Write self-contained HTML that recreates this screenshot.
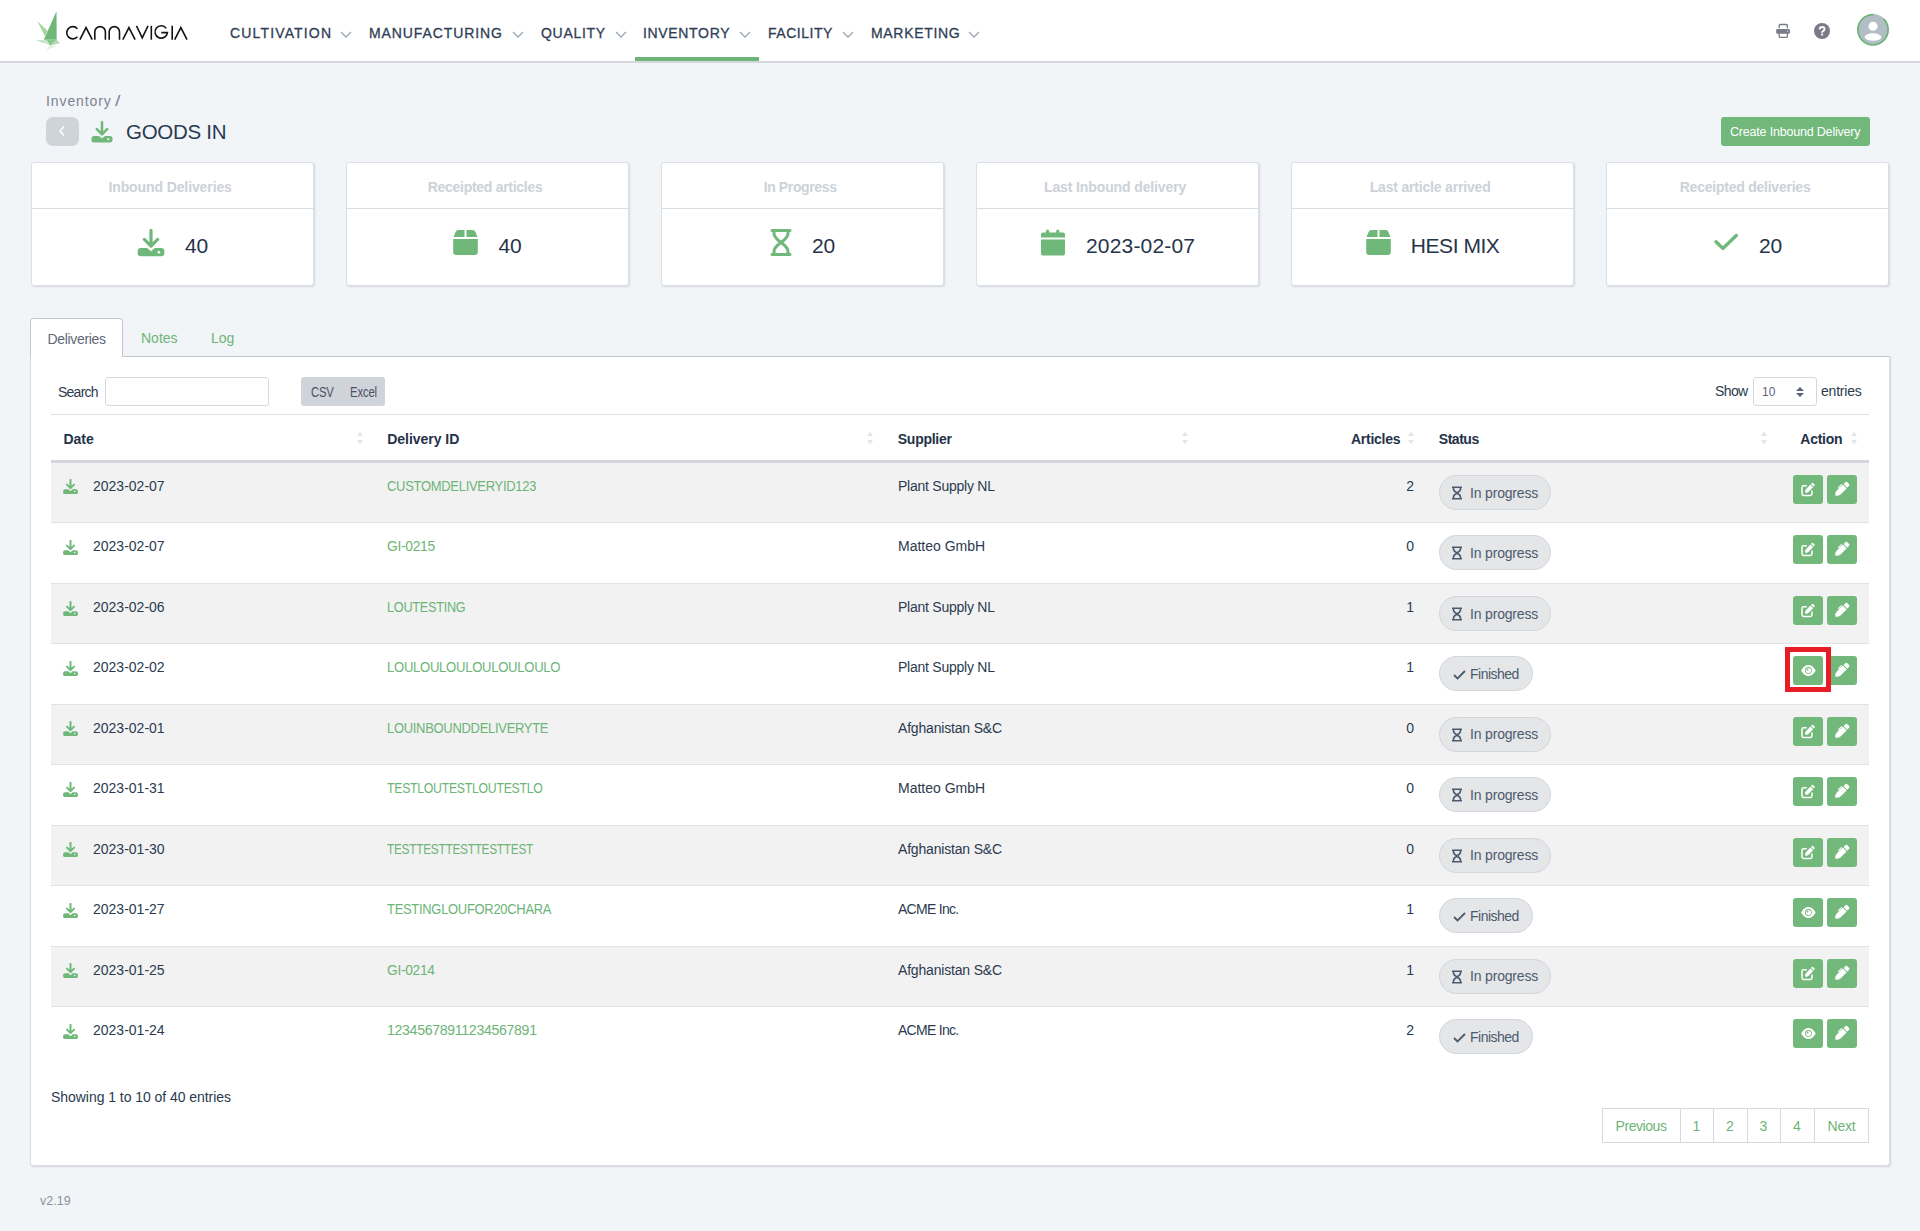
<!DOCTYPE html>
<html><head><meta charset="utf-8"><style>
*{box-sizing:border-box}
html,body{margin:0;padding:0}
body{width:1920px;height:1231px;overflow:hidden;position:relative;background:#f1f5f8;font-family:"Liberation Sans",sans-serif;color:#2c3a4f}
.abs{position:absolute;white-space:nowrap}
#hdr{position:absolute;left:0;top:0;width:1920px;height:63px;background:#fff;border-bottom:2px solid #d5d9de}
.nav{position:absolute;top:25px;font-size:14px;color:#2f3e56;-webkit-text-stroke:0.3px #2f3e56;white-space:nowrap;line-height:16px}
.chev{position:absolute;top:31px;width:12px;height:7px}
.card{position:absolute;top:162px;height:124px;background:#fff;border:1px solid #dcdfe4;border-radius:3px;box-shadow:1px 1px 2px rgba(0,0,0,.12)}
.card .ch{position:absolute;left:0;right:0;top:0;height:46px;border-bottom:1px solid #d9dce1}
.card .ct{position:absolute;left:0;right:5px;top:16px;text-align:center;font-size:14px;font-weight:bold;color:#cdd1d8;line-height:16px;white-space:nowrap}
.card .cv{position:absolute;left:0;right:0;top:68.5px;height:28px;display:flex;justify-content:center;align-items:center;font-size:21px;color:#263449;line-height:24px;white-space:nowrap}
.tr{position:absolute;left:51px;width:1818px}
.rdl{position:absolute;left:12px}
.td{position:absolute;font-size:14px;line-height:16px;color:#2c3a4f;white-space:nowrap}
.lnk{color:#6db477}
.pill{position:absolute;left:1388px;height:35px;border-radius:18px;background:#e4e6e8;border:1px solid #d2d6dc}
.pill svg{position:absolute}
.pt{position:absolute;left:30px;top:8.5px;font-size:14px;line-height:16px;color:#4d5a6e;white-space:nowrap}
.btn{position:absolute;width:30px;height:29px;background:#71b87a;border-radius:3px}
.btn svg{position:absolute;left:0;top:0}
.th{position:absolute;top:431px;font-size:14px;font-weight:bold;color:#253249;line-height:16px;white-space:nowrap}
.sort{position:absolute;top:431px;width:6px;height:14px}
</style></head><body>
<div id="hdr"></div>
<svg class="abs" style="left:30px;top:5px" width="170" height="50" viewBox="30 5 170 50">
  <polygon points="37.3,20.9 47.4,30.8 45,36.4" fill="#a6d39f"/>
  <polygon points="35.6,40.1 46.8,40.1 48.7,44.3 41.2,42.4" fill="#c9e5ca"/>
  <polygon points="56.7,39.8 59.9,43.3 49.8,45.8" fill="#b5dab6"/>
  <polygon points="49.8,45.8 46.1,50.6 56.2,46.1" fill="#e0f0e0"/>
  <polygon points="56.5,11.2 43.8,39.8 56.7,39.8" fill="#6fb878"/>
  <polygon points="46.8,39.9 56.7,39.8 49.8,45.8" fill="#8dc68f"/>
  <g fill="none" stroke="#141414" stroke-width="1.6" stroke-linecap="butt" stroke-linejoin="miter">
    <path d="M77.38,28.67 A6.1,6.1 0 1 0 77.38,36.83"/>
    <path d="M79.9,39.7 L86.05,27.6 L92.2,39.7"/>
    <path d="M94.8,39.7 V31.9 A5.3,5.3 0 0 1 105.4,31.9 V39.7"/>
    <path d="M109.2,39.7 V31.9 A5.15,5.3 0 0 1 119.5,31.9 V39.7"/>
    <path d="M122.8,39.7 L128.95,27.6 L135.1,39.7"/>
    <path d="M136.5,25.8 L142.25,37.9 L148,25.8"/>
    <path d="M151.3,25.8 V39.7"/>
    <path d="M166.3,28.4 A6.2,6.15 0 1 0 167.4,32.6 H161.3"/>
    <path d="M172.2,25.8 V39.7"/>
    <path d="M174.7,39.7 L180.85,27.6 L187,39.7"/>
  </g>
</svg>
<div class="nav" style="left:230px;letter-spacing:1.155px;">CULTIVATION</div>
<svg class="chev" style="left:340px" viewBox="0 0 12 7"><path d="M1,1 L6,6 L11,1" fill="none" stroke="#9aa6b4" stroke-width="1.3"/></svg>
<div class="nav" style="left:369px;letter-spacing:0.906px;">MANUFACTURING</div>
<svg class="chev" style="left:512px" viewBox="0 0 12 7"><path d="M1,1 L6,6 L11,1" fill="none" stroke="#9aa6b4" stroke-width="1.3"/></svg>
<div class="nav" style="left:541px;letter-spacing:0.716px;">QUALITY</div>
<svg class="chev" style="left:615px" viewBox="0 0 12 7"><path d="M1,1 L6,6 L11,1" fill="none" stroke="#9aa6b4" stroke-width="1.3"/></svg>
<div class="nav" style="left:643px;letter-spacing:0.666px;">INVENTORY</div>
<svg class="chev" style="left:739px" viewBox="0 0 12 7"><path d="M1,1 L6,6 L11,1" fill="none" stroke="#9aa6b4" stroke-width="1.3"/></svg>
<div class="nav" style="left:768px;letter-spacing:0.516px;">FACILITY</div>
<svg class="chev" style="left:842px" viewBox="0 0 12 7"><path d="M1,1 L6,6 L11,1" fill="none" stroke="#9aa6b4" stroke-width="1.3"/></svg>
<div class="nav" style="left:871px;letter-spacing:0.683px;">MARKETING</div>
<svg class="chev" style="left:968px" viewBox="0 0 12 7"><path d="M1,1 L6,6 L11,1" fill="none" stroke="#9aa6b4" stroke-width="1.3"/></svg>
<div class="abs" style="left:635px;top:57px;width:124px;height:4px;background:#6db477"></div>
<svg class="abs" style="left:1770px;top:18px" width="26" height="26" viewBox="0 0 26 26">
  <path d="M9.2,10.2 V7.4 a0.9,0.9 0 0 1 0.9,-0.9 H16.5 a0.9,0.9 0 0 1 0.9,0.9 V10.2" fill="none" stroke="#7a7b88" stroke-width="1.3"/>
  <rect x="6.2" y="11.1" width="13.7" height="4.6" rx="1" fill="#7a7b88"/>
  <circle cx="17.6" cy="13" r="0.6" fill="#fff"/>
  <path d="M9.2,15.2 V18.4 a0.9,0.9 0 0 0 0.9,0.9 H16.5 a0.9,0.9 0 0 0 0.9,-0.9 V15.2" fill="none" stroke="#7a7b88" stroke-width="1.3"/>
</svg>
<svg class="abs" style="left:1814px;top:23px" width="16" height="16" viewBox="0 0 16 16">
  <circle cx="8" cy="8" r="8" fill="#7a7b88"/>
  <path d="M5.7,6.4 Q5.8,4 8.1,4 Q10.5,4 10.5,6.1 Q10.5,7.4 9,8.2 Q8.1,8.7 8.1,9.7" fill="none" stroke="#fff" stroke-width="1.9"/>
  <rect x="7.1" y="10.6" width="2" height="1.8" fill="#fff"/>
</svg>
<svg class="abs" style="left:1856px;top:13px" width="34" height="34" viewBox="0 0 34 34">
  <circle cx="17" cy="16.7" r="15.6" fill="#b3bdc6"/>
  <circle cx="17" cy="16.7" r="15.1" fill="none" stroke="#6db477" stroke-width="1.7" stroke-dasharray="71.2 10.8 100"/>
  <circle cx="17" cy="13.2" r="4.5" fill="#fff"/>
  <ellipse cx="17" cy="24.1" rx="8.4" ry="3.75" fill="#fff"/>
</svg>
<div class="abs" style="left:46px;top:92.5px;font-size:14px;color:#7b8391;line-height:16px;letter-spacing:0.9px">Inventory</div>
<div class="abs" style="left:114.5px;top:92.5px;font-size:14px;color:#7b8391;line-height:16px;transform:scaleX(1.4);transform-origin:left">/</div>
<div class="abs" style="left:46px;top:117px;width:33px;height:29px;border-radius:7px;background:#cfd3da"></div>
<svg class="abs" style="left:56px;top:124px" width="12" height="14" viewBox="0 0 12 14"><path d="M8,2.5 L4,7 L8,11.5" fill="none" stroke="#fff" stroke-width="1.5"/></svg>
<svg class="abs" style="left:91px;top:121px" width="22" height="22" viewBox="0 0 22 22"><path d="M11,1.2 V13 M5.8,8.2 L11,13.4 L16.2,8.2" fill="none" stroke="#6fb879" stroke-width="2.5" stroke-linecap="round" stroke-linejoin="round"/><path d="M3,15 h5 l3,2.5 l3,-2.5 h5 a2.5,2.5 0 0 1 2.5,2.5 v1.5 a2.5,2.5 0 0 1 -2.5,2.5 h-16 a2.5,2.5 0 0 1 -2.5,-2.5 v-1.5 a2.5,2.5 0 0 1 2.5,-2.5 Z" fill="#6fb879"/><circle cx="17.2" cy="18.3" r="1" fill="#fff"/></svg>
<div class="abs" style="left:126px;top:121px;font-size:20.5px;color:#2c3a52;line-height:22px;letter-spacing:-0.288px;">GOODS IN</div>
<div class="abs" style="left:1721px;top:117px;width:149px;height:29px;border-radius:3px;background:#71b87a"></div>
<div class="abs" style="left:1730px;top:124.5px;font-size:12.5px;color:#fff;line-height:15px;letter-spacing:-0.191px;">Create Inbound Delivery</div>
<div class="card" style="left:30.80px;width:283.6px"><div class="ch"></div><div class="ct" style="letter-spacing:-0.103px;">Inbound Deliveries</div><div class="cv"><svg width="28" height="28" viewBox="0 0 22 22" style="margin-right:20px;position:relative;top:-3px"><path d="M11,1.2 V13 M5.8,8.2 L11,13.4 L16.2,8.2" fill="none" stroke="#6fb879" stroke-width="2.5" stroke-linecap="round" stroke-linejoin="round"/><path d="M3,15 h5 l3,2.5 l3,-2.5 h5 a2.5,2.5 0 0 1 2.5,2.5 v1.5 a2.5,2.5 0 0 1 -2.5,2.5 h-16 a2.5,2.5 0 0 1 -2.5,-2.5 v-1.5 a2.5,2.5 0 0 1 2.5,-2.5 Z" fill="#6fb879"/><circle cx="17.2" cy="18.3" r="1" fill="#fff"/></svg>40</div></div>
<div class="card" style="left:345.80px;width:283.6px"><div class="ch"></div><div class="ct" style="letter-spacing:-0.285px;">Receipted articles</div><div class="cv"><svg width="25" height="25" viewBox="0 0 24.6 25" style="margin-right:20px;position:relative;top:-3.5px"><path d="M0.3,7 L2.5,1.8 Q3.3,0 5,0 H11.3 V7 Z M13.3,0 H19.6 Q21.3,0 22.1,1.8 L24.3,7 H13.3 Z M0,9 H24.6 V21.8 Q24.6,25 21.4,25 H3.2 Q0,25 0,21.8 Z" fill="#6fb879"/></svg>40</div></div>
<div class="card" style="left:660.80px;width:283.6px"><div class="ch"></div><div class="ct" style="letter-spacing:-0.373px;">In Progress</div><div class="cv"><svg width="22" height="29" viewBox="0 0 22 28" style="margin-right:20px;position:relative;top:-3px"><path d="M2,2 H20 M2,26 H20 M4,2 V5 Q4,9 11,14 Q18,9 18,5 V2 M4,26 V23 Q4,19 11,14 Q18,19 18,23 V26" fill="none" stroke="#6fb879" stroke-width="3" stroke-linecap="round"/></svg>20</div></div>
<div class="card" style="left:975.80px;width:283.6px"><div class="ch"></div><div class="ct" style="letter-spacing:-0.12px;">Last Inbound delivery</div><div class="cv"><svg width="26" height="29" viewBox="0 0 26 28" style="margin-right:20px;position:relative;top:-3px"><path d="M7.6,2.5 v3 M17.8,2.5 v3" stroke="#6fb879" stroke-width="3.2" stroke-linecap="round"/><path d="M1,6 a2,2 0 0 1 2,-2 h20 a2,2 0 0 1 2,2 v3 H1 Z M1,11 h24 v14 a2,2 0 0 1 -2,2 H3 a2,2 0 0 1 -2,-2 Z" fill="#6fb879"/></svg><span style="letter-spacing:0.175px;">2023-02-07</span></div></div>
<div class="card" style="left:1290.80px;width:283.6px"><div class="ch"></div><div class="ct" style="letter-spacing:-0.185px;">Last article arrived</div><div class="cv"><svg width="25" height="25" viewBox="0 0 24.6 25" style="margin-right:20px;position:relative;top:-3.5px"><path d="M0.3,7 L2.5,1.8 Q3.3,0 5,0 H11.3 V7 Z M13.3,0 H19.6 Q21.3,0 22.1,1.8 L24.3,7 H13.3 Z M0,9 H24.6 V21.8 Q24.6,25 21.4,25 H3.2 Q0,25 0,21.8 Z" fill="#6fb879"/></svg><span style="letter-spacing:-0.455px;">HESI MIX</span></div></div>
<div class="card" style="left:1605.80px;width:283.6px"><div class="ch"></div><div class="ct" style="letter-spacing:-0.232px;">Receipted deliveries</div><div class="cv"><svg width="26" height="20" viewBox="0 0 26 20" style="margin-right:20px;position:relative;top:-3px"><path d="M3,8.8 L9.8,15.4 L23.3,2.5" fill="none" stroke="#6fb879" stroke-width="3.4" stroke-linecap="round" stroke-linejoin="round"/></svg>20</div></div>
<div class="abs" style="left:30px;top:356px;width:1860px;height:810px;background:#fff;border:1px solid #d9dde2;border-top-color:#c3c8cf;box-shadow:1px 1px 2px rgba(0,0,0,.12);border-radius:0 0 3px 3px"></div>
<div class="abs" style="left:30px;top:318px;width:93px;height:39px;background:#fff;border:1px solid #c3c8cf;border-bottom:none;border-radius:4px 4px 0 0"></div>
<div class="abs" style="left:47.5px;top:330.5px;font-size:14px;color:#5f6878;line-height:16px;letter-spacing:-0.33px;">Deliveries</div>
<div class="abs" style="left:141px;top:330px;font-size:14px;color:#6db477;line-height:16px">Notes</div>
<div class="abs" style="left:211px;top:330px;font-size:14px;color:#6db477;line-height:16px">Log</div>
<div class="abs" style="left:58px;top:383.5px;font-size:14px;color:#2c3a4f;line-height:16px;letter-spacing:-0.752px;">Search</div>
<div class="abs" style="left:105px;top:377px;width:164px;height:29px;border:1px solid #d5d9de;border-radius:3px;background:#fff"></div>
<div class="abs" style="left:301px;top:377px;width:84px;height:29px;border-radius:3px;background:#cfd3da"></div>
<div class="abs" style="left:310.5px;top:384.5px;font-size:14px;color:#4a5263;line-height:15px;letter-spacing:-0.2px;transform:scaleX(0.8);transform-origin:0 0">CSV</div>
<div class="abs" style="left:349.5px;top:384.5px;font-size:14px;color:#4a5263;line-height:15px;letter-spacing:-0.2px;transform:scaleX(0.81);transform-origin:0 0">Excel</div>
<div class="abs" style="left:1715px;top:382.5px;font-size:14px;color:#2c3a4f;line-height:16px;letter-spacing:-0.61px;">Show</div>
<div class="abs" style="left:1753px;top:377px;width:64px;height:29px;border:1px solid #d5d9de;border-radius:3px;background:#fff"></div>
<div class="abs" style="left:1762px;top:385px;font-size:12px;color:#5d6778;line-height:14px">10</div>
<svg class="abs" style="left:1796px;top:386px" width="8" height="12" viewBox="0 0 8 12"><path d="M0,5 L4,1 L8,5 Z M0,7 L4,11 L8,7 Z" fill="#5b6677"/></svg>
<div class="abs" style="left:1821px;top:382.5px;font-size:14px;color:#2c3a4f;line-height:16px;letter-spacing:-0.205px;">entries</div>
<div class="abs" style="left:51px;top:414px;width:1818px;height:1px;background:#dcdfe4"></div>
<div class="abs" style="left:51px;top:460px;width:1818px;height:3px;background:#d3d7dd"></div>
<div class="th" style="left:63.5px;letter-spacing:-0.053px;">Date</div>
<div class="th" style="left:387.25px;letter-spacing:-0.028px;">Delivery ID</div>
<div class="th" style="left:897.8px;letter-spacing:-0.274px;">Supplier</div>
<div class="th" style="left:1351px;letter-spacing:-0.266px;">Articles</div>
<div class="th" style="left:1438.75px;letter-spacing:-0.459px;">Status</div>
<div class="th" style="left:1800.3px;letter-spacing:-0.253px;">Action</div>
<svg class="sort" style="left:356.5px" viewBox="0 0 6 14"><path d="M0,5 L3,0.5 L6,5 Z M0,9 L3,13.5 L6,9 Z" fill="#e3e5e9"/></svg>
<svg class="sort" style="left:867.3px" viewBox="0 0 6 14"><path d="M0,5 L3,0.5 L6,5 Z M0,9 L3,13.5 L6,9 Z" fill="#e3e5e9"/></svg>
<svg class="sort" style="left:1181.7px" viewBox="0 0 6 14"><path d="M0,5 L3,0.5 L6,5 Z M0,9 L3,13.5 L6,9 Z" fill="#e3e5e9"/></svg>
<svg class="sort" style="left:1408.3px" viewBox="0 0 6 14"><path d="M0,5 L3,0.5 L6,5 Z M0,9 L3,13.5 L6,9 Z" fill="#e3e5e9"/></svg>
<svg class="sort" style="left:1761.3px" viewBox="0 0 6 14"><path d="M0,5 L3,0.5 L6,5 Z M0,9 L3,13.5 L6,9 Z" fill="#e3e5e9"/></svg>
<svg class="sort" style="left:1850.7px" viewBox="0 0 6 14"><path d="M0,5 L3,0.5 L6,5 Z M0,9 L3,13.5 L6,9 Z" fill="#e3e5e9"/></svg>
<div class="tr" style="top:462.500px;height:59.500px;background:#f2f2f2;"><svg class="rdl" width="15" height="15" viewBox="0 0 22 22" style="top:16.5px"><path d="M11,1.2 V13 M5.8,8.2 L11,13.4 L16.2,8.2" fill="none" stroke="#6fb879" stroke-width="2.9" stroke-linecap="round" stroke-linejoin="round"/><path d="M3,15 h5 l3,2.9 l3,-2.9 h5 a2.9,2.9 0 0 1 2.9,2.9 v1.5 a2.9,2.9 0 0 1 -2.9,2.9 h-16 a2.9,2.9 0 0 1 -2.9,-2.9 v-1.5 a2.9,2.9 0 0 1 2.9,-2.9 Z" fill="#6fb879"/><circle cx="17.2" cy="18.3" r="1" fill="#fff"/></svg><span class="td" style="left:42px;top:15.5px">2023-02-07</span><span class="td lnk" style="left:336px;top:15.5px;letter-spacing:-0.3px;transform:scaleX(0.9258);transform-origin:0 0;">CUSTOMDELIVERYID123</span><span class="td" style="left:847px;top:15.5px;letter-spacing:-0.243px;">Plant Supply NL</span><span class="td" style="right:455px;top:15.5px">2</span><span class="pill" style="top:12.5px;width:112px"><svg style="left:11px;top:10px" width="12" height="14" viewBox="0 0 12 14"><path d="M1,1.2 H11 M1,12.8 H11 M2.5,1.2 V3 Q2.5,5 6,7 Q9.5,5 9.5,3 V1.2 M2.5,12.8 V11 Q2.5,9 6,7 Q9.5,9 9.5,11 V12.8" fill="none" stroke="#4d5a6e" stroke-width="1.6"/></svg><span class="pt" style="letter-spacing:-0.175px;">In progress</span></span><span class="btn" style="left:1742px;top:12.5px"><svg width="30" height="29" viewBox="0 0 30 29"><path d="M13.8,10.8 H10.6 A1.6,1.6 0 0 0 9,12.4 V18.8 A1.6,1.6 0 0 0 10.6,20.4 H17.4 A1.6,1.6 0 0 0 19,18.8 V15.4" fill="none" stroke="#fff" stroke-width="1.5"/><path d="M12.20,17.60 Q11.58,15.52 12.94,14.13 L17.41,9.55 L20.13,12.21 L15.66,16.78 Q14.29,18.18 12.20,17.60 Z" fill="#fff"/><path d="M18.04,8.91 L18.98,7.94 Q19.54,7.37 20.90,8.70 Q22.26,10.03 21.70,10.60 L20.76,11.56 Z" fill="#fff"/></svg></span><span class="btn" style="left:1776px;top:12.5px"><svg width="30" height="29" viewBox="0 0 30 29"><path d="M8.30,20.70 Q7.67,17.55 9.99,15.27 L15.86,9.55 L19.63,13.41 L13.76,19.14 Q11.44,21.41 8.30,20.70 Z" fill="#fff"/><path d="M16.64,9.06 L18.88,6.87 Q19.45,6.31 21.20,8.10 Q22.95,9.89 22.37,10.45 L20.13,12.64 Z" fill="#fff"/><path d="M11.22,12.81 L14.66,9.46" stroke="#fff" stroke-width="1.1" fill="none" transform="scale(1)"/></svg></span></div>
<div class="tr" style="top:522.000px;height:61.000px;background:#fff;border-top:1px solid #dfe2e6;"><svg class="rdl" width="15" height="15" viewBox="0 0 22 22" style="top:16.5px"><path d="M11,1.2 V13 M5.8,8.2 L11,13.4 L16.2,8.2" fill="none" stroke="#6fb879" stroke-width="2.9" stroke-linecap="round" stroke-linejoin="round"/><path d="M3,15 h5 l3,2.9 l3,-2.9 h5 a2.9,2.9 0 0 1 2.9,2.9 v1.5 a2.9,2.9 0 0 1 -2.9,2.9 h-16 a2.9,2.9 0 0 1 -2.9,-2.9 v-1.5 a2.9,2.9 0 0 1 2.9,-2.9 Z" fill="#6fb879"/><circle cx="17.2" cy="18.3" r="1" fill="#fff"/></svg><span class="td" style="left:42px;top:15px">2023-02-07</span><span class="td lnk" style="left:336px;top:15px;letter-spacing:-0.3px;transform:scaleX(0.9878);transform-origin:0 0;">GI-0215</span><span class="td" style="left:847px;top:15px;">Matteo GmbH</span><span class="td" style="right:455px;top:15px">0</span><span class="pill" style="top:12px;width:112px"><svg style="left:11px;top:10px" width="12" height="14" viewBox="0 0 12 14"><path d="M1,1.2 H11 M1,12.8 H11 M2.5,1.2 V3 Q2.5,5 6,7 Q9.5,5 9.5,3 V1.2 M2.5,12.8 V11 Q2.5,9 6,7 Q9.5,9 9.5,11 V12.8" fill="none" stroke="#4d5a6e" stroke-width="1.6"/></svg><span class="pt" style="letter-spacing:-0.175px;">In progress</span></span><span class="btn" style="left:1742px;top:12px"><svg width="30" height="29" viewBox="0 0 30 29"><path d="M13.8,10.8 H10.6 A1.6,1.6 0 0 0 9,12.4 V18.8 A1.6,1.6 0 0 0 10.6,20.4 H17.4 A1.6,1.6 0 0 0 19,18.8 V15.4" fill="none" stroke="#fff" stroke-width="1.5"/><path d="M12.20,17.60 Q11.58,15.52 12.94,14.13 L17.41,9.55 L20.13,12.21 L15.66,16.78 Q14.29,18.18 12.20,17.60 Z" fill="#fff"/><path d="M18.04,8.91 L18.98,7.94 Q19.54,7.37 20.90,8.70 Q22.26,10.03 21.70,10.60 L20.76,11.56 Z" fill="#fff"/></svg></span><span class="btn" style="left:1776px;top:12px"><svg width="30" height="29" viewBox="0 0 30 29"><path d="M8.30,20.70 Q7.67,17.55 9.99,15.27 L15.86,9.55 L19.63,13.41 L13.76,19.14 Q11.44,21.41 8.30,20.70 Z" fill="#fff"/><path d="M16.64,9.06 L18.88,6.87 Q19.45,6.31 21.20,8.10 Q22.95,9.89 22.37,10.45 L20.13,12.64 Z" fill="#fff"/><path d="M11.22,12.81 L14.66,9.46" stroke="#fff" stroke-width="1.1" fill="none" transform="scale(1)"/></svg></span></div>
<div class="tr" style="top:583.000px;height:60.400px;background:#f2f2f2;border-top:1px solid #dfe2e6;"><svg class="rdl" width="15" height="15" viewBox="0 0 22 22" style="top:16.5px"><path d="M11,1.2 V13 M5.8,8.2 L11,13.4 L16.2,8.2" fill="none" stroke="#6fb879" stroke-width="2.9" stroke-linecap="round" stroke-linejoin="round"/><path d="M3,15 h5 l3,2.9 l3,-2.9 h5 a2.9,2.9 0 0 1 2.9,2.9 v1.5 a2.9,2.9 0 0 1 -2.9,2.9 h-16 a2.9,2.9 0 0 1 -2.9,-2.9 v-1.5 a2.9,2.9 0 0 1 2.9,-2.9 Z" fill="#6fb879"/><circle cx="17.2" cy="18.3" r="1" fill="#fff"/></svg><span class="td" style="left:42px;top:15px">2023-02-06</span><span class="td lnk" style="left:336px;top:15px;letter-spacing:-0.3px;transform:scaleX(0.907);transform-origin:0 0;">LOUTESTING</span><span class="td" style="left:847px;top:15px;letter-spacing:-0.243px;">Plant Supply NL</span><span class="td" style="right:455px;top:15px">1</span><span class="pill" style="top:12px;width:112px"><svg style="left:11px;top:10px" width="12" height="14" viewBox="0 0 12 14"><path d="M1,1.2 H11 M1,12.8 H11 M2.5,1.2 V3 Q2.5,5 6,7 Q9.5,5 9.5,3 V1.2 M2.5,12.8 V11 Q2.5,9 6,7 Q9.5,9 9.5,11 V12.8" fill="none" stroke="#4d5a6e" stroke-width="1.6"/></svg><span class="pt" style="letter-spacing:-0.175px;">In progress</span></span><span class="btn" style="left:1742px;top:12px"><svg width="30" height="29" viewBox="0 0 30 29"><path d="M13.8,10.8 H10.6 A1.6,1.6 0 0 0 9,12.4 V18.8 A1.6,1.6 0 0 0 10.6,20.4 H17.4 A1.6,1.6 0 0 0 19,18.8 V15.4" fill="none" stroke="#fff" stroke-width="1.5"/><path d="M12.20,17.60 Q11.58,15.52 12.94,14.13 L17.41,9.55 L20.13,12.21 L15.66,16.78 Q14.29,18.18 12.20,17.60 Z" fill="#fff"/><path d="M18.04,8.91 L18.98,7.94 Q19.54,7.37 20.90,8.70 Q22.26,10.03 21.70,10.60 L20.76,11.56 Z" fill="#fff"/></svg></span><span class="btn" style="left:1776px;top:12px"><svg width="30" height="29" viewBox="0 0 30 29"><path d="M8.30,20.70 Q7.67,17.55 9.99,15.27 L15.86,9.55 L19.63,13.41 L13.76,19.14 Q11.44,21.41 8.30,20.70 Z" fill="#fff"/><path d="M16.64,9.06 L18.88,6.87 Q19.45,6.31 21.20,8.10 Q22.95,9.89 22.37,10.45 L20.13,12.64 Z" fill="#fff"/><path d="M11.22,12.81 L14.66,9.46" stroke="#fff" stroke-width="1.1" fill="none" transform="scale(1)"/></svg></span></div>
<div class="tr" style="top:643.400px;height:60.500px;background:#fff;border-top:1px solid #dfe2e6;"><svg class="rdl" width="15" height="15" viewBox="0 0 22 22" style="top:16.5px"><path d="M11,1.2 V13 M5.8,8.2 L11,13.4 L16.2,8.2" fill="none" stroke="#6fb879" stroke-width="2.9" stroke-linecap="round" stroke-linejoin="round"/><path d="M3,15 h5 l3,2.9 l3,-2.9 h5 a2.9,2.9 0 0 1 2.9,2.9 v1.5 a2.9,2.9 0 0 1 -2.9,2.9 h-16 a2.9,2.9 0 0 1 -2.9,-2.9 v-1.5 a2.9,2.9 0 0 1 2.9,-2.9 Z" fill="#6fb879"/><circle cx="17.2" cy="18.3" r="1" fill="#fff"/></svg><span class="td" style="left:42px;top:15px">2023-02-02</span><span class="td lnk" style="left:336px;top:15px;letter-spacing:-0.3px;transform:scaleX(0.9343);transform-origin:0 0;">LOULOULOULOULOULOULO</span><span class="td" style="left:847px;top:15px;letter-spacing:-0.243px;">Plant Supply NL</span><span class="td" style="right:455px;top:15px">1</span><span class="pill" style="top:12px;width:94px"><svg style="left:12.5px;top:12.5px" width="13" height="10" viewBox="0 0 13 10"><path d="M1,5 L4.5,8.5 L12,1" fill="none" stroke="#4d5a6e" stroke-width="1.8"/></svg><span class="pt" style="letter-spacing:-0.503px;">Finished</span></span><span class="btn" style="left:1742px;top:12px"><svg width="30" height="29" viewBox="0 0 30 29"><path d="M8.1,14.5 C10.3,10.6 12.8,9 15.4,9 C18,9 20.5,10.6 22.7,14.5 C20.5,18.4 18,20 15.4,20 C12.8,20 10.3,18.4 8.1,14.5 Z" fill="#fff"/><circle cx="15.4" cy="14.4" r="3.4" fill="#71b87a"/><circle cx="15.5" cy="14.5" r="2.6" fill="#fff"/><circle cx="14.6" cy="13.6" r="0.9" fill="#71b87a"/></svg></span><span class="btn" style="left:1776px;top:12px"><svg width="30" height="29" viewBox="0 0 30 29"><path d="M8.30,20.70 Q7.67,17.55 9.99,15.27 L15.86,9.55 L19.63,13.41 L13.76,19.14 Q11.44,21.41 8.30,20.70 Z" fill="#fff"/><path d="M16.64,9.06 L18.88,6.87 Q19.45,6.31 21.20,8.10 Q22.95,9.89 22.37,10.45 L20.13,12.64 Z" fill="#fff"/><path d="M11.22,12.81 L14.66,9.46" stroke="#fff" stroke-width="1.1" fill="none" transform="scale(1)"/></svg></span></div>
<div class="tr" style="top:703.900px;height:60.500px;background:#f2f2f2;border-top:1px solid #dfe2e6;"><svg class="rdl" width="15" height="15" viewBox="0 0 22 22" style="top:16.5px"><path d="M11,1.2 V13 M5.8,8.2 L11,13.4 L16.2,8.2" fill="none" stroke="#6fb879" stroke-width="2.9" stroke-linecap="round" stroke-linejoin="round"/><path d="M3,15 h5 l3,2.9 l3,-2.9 h5 a2.9,2.9 0 0 1 2.9,2.9 v1.5 a2.9,2.9 0 0 1 -2.9,2.9 h-16 a2.9,2.9 0 0 1 -2.9,-2.9 v-1.5 a2.9,2.9 0 0 1 2.9,-2.9 Z" fill="#6fb879"/><circle cx="17.2" cy="18.3" r="1" fill="#fff"/></svg><span class="td" style="left:42px;top:15px">2023-02-01</span><span class="td lnk" style="left:336px;top:15px;letter-spacing:-0.3px;transform:scaleX(0.9253);transform-origin:0 0;">LOUINBOUNDDELIVERYTE</span><span class="td" style="left:847px;top:15px;letter-spacing:-0.18px;">Afghanistan S&amp;C</span><span class="td" style="right:455px;top:15px">0</span><span class="pill" style="top:12px;width:112px"><svg style="left:11px;top:10px" width="12" height="14" viewBox="0 0 12 14"><path d="M1,1.2 H11 M1,12.8 H11 M2.5,1.2 V3 Q2.5,5 6,7 Q9.5,5 9.5,3 V1.2 M2.5,12.8 V11 Q2.5,9 6,7 Q9.5,9 9.5,11 V12.8" fill="none" stroke="#4d5a6e" stroke-width="1.6"/></svg><span class="pt" style="letter-spacing:-0.175px;">In progress</span></span><span class="btn" style="left:1742px;top:12px"><svg width="30" height="29" viewBox="0 0 30 29"><path d="M13.8,10.8 H10.6 A1.6,1.6 0 0 0 9,12.4 V18.8 A1.6,1.6 0 0 0 10.6,20.4 H17.4 A1.6,1.6 0 0 0 19,18.8 V15.4" fill="none" stroke="#fff" stroke-width="1.5"/><path d="M12.20,17.60 Q11.58,15.52 12.94,14.13 L17.41,9.55 L20.13,12.21 L15.66,16.78 Q14.29,18.18 12.20,17.60 Z" fill="#fff"/><path d="M18.04,8.91 L18.98,7.94 Q19.54,7.37 20.90,8.70 Q22.26,10.03 21.70,10.60 L20.76,11.56 Z" fill="#fff"/></svg></span><span class="btn" style="left:1776px;top:12px"><svg width="30" height="29" viewBox="0 0 30 29"><path d="M8.30,20.70 Q7.67,17.55 9.99,15.27 L15.86,9.55 L19.63,13.41 L13.76,19.14 Q11.44,21.41 8.30,20.70 Z" fill="#fff"/><path d="M16.64,9.06 L18.88,6.87 Q19.45,6.31 21.20,8.10 Q22.95,9.89 22.37,10.45 L20.13,12.64 Z" fill="#fff"/><path d="M11.22,12.81 L14.66,9.46" stroke="#fff" stroke-width="1.1" fill="none" transform="scale(1)"/></svg></span></div>
<div class="tr" style="top:764.400px;height:60.500px;background:#fff;border-top:1px solid #dfe2e6;"><svg class="rdl" width="15" height="15" viewBox="0 0 22 22" style="top:16.5px"><path d="M11,1.2 V13 M5.8,8.2 L11,13.4 L16.2,8.2" fill="none" stroke="#6fb879" stroke-width="2.9" stroke-linecap="round" stroke-linejoin="round"/><path d="M3,15 h5 l3,2.9 l3,-2.9 h5 a2.9,2.9 0 0 1 2.9,2.9 v1.5 a2.9,2.9 0 0 1 -2.9,2.9 h-16 a2.9,2.9 0 0 1 -2.9,-2.9 v-1.5 a2.9,2.9 0 0 1 2.9,-2.9 Z" fill="#6fb879"/><circle cx="17.2" cy="18.3" r="1" fill="#fff"/></svg><span class="td" style="left:42px;top:15px">2023-01-31</span><span class="td lnk" style="left:336px;top:15px;letter-spacing:-0.3px;transform:scaleX(0.8758);transform-origin:0 0;">TESTLOUTESTLOUTESTLO</span><span class="td" style="left:847px;top:15px;">Matteo GmbH</span><span class="td" style="right:455px;top:15px">0</span><span class="pill" style="top:12px;width:112px"><svg style="left:11px;top:10px" width="12" height="14" viewBox="0 0 12 14"><path d="M1,1.2 H11 M1,12.8 H11 M2.5,1.2 V3 Q2.5,5 6,7 Q9.5,5 9.5,3 V1.2 M2.5,12.8 V11 Q2.5,9 6,7 Q9.5,9 9.5,11 V12.8" fill="none" stroke="#4d5a6e" stroke-width="1.6"/></svg><span class="pt" style="letter-spacing:-0.175px;">In progress</span></span><span class="btn" style="left:1742px;top:12px"><svg width="30" height="29" viewBox="0 0 30 29"><path d="M13.8,10.8 H10.6 A1.6,1.6 0 0 0 9,12.4 V18.8 A1.6,1.6 0 0 0 10.6,20.4 H17.4 A1.6,1.6 0 0 0 19,18.8 V15.4" fill="none" stroke="#fff" stroke-width="1.5"/><path d="M12.20,17.60 Q11.58,15.52 12.94,14.13 L17.41,9.55 L20.13,12.21 L15.66,16.78 Q14.29,18.18 12.20,17.60 Z" fill="#fff"/><path d="M18.04,8.91 L18.98,7.94 Q19.54,7.37 20.90,8.70 Q22.26,10.03 21.70,10.60 L20.76,11.56 Z" fill="#fff"/></svg></span><span class="btn" style="left:1776px;top:12px"><svg width="30" height="29" viewBox="0 0 30 29"><path d="M8.30,20.70 Q7.67,17.55 9.99,15.27 L15.86,9.55 L19.63,13.41 L13.76,19.14 Q11.44,21.41 8.30,20.70 Z" fill="#fff"/><path d="M16.64,9.06 L18.88,6.87 Q19.45,6.31 21.20,8.10 Q22.95,9.89 22.37,10.45 L20.13,12.64 Z" fill="#fff"/><path d="M11.22,12.81 L14.66,9.46" stroke="#fff" stroke-width="1.1" fill="none" transform="scale(1)"/></svg></span></div>
<div class="tr" style="top:824.900px;height:60.500px;background:#f2f2f2;border-top:1px solid #dfe2e6;"><svg class="rdl" width="15" height="15" viewBox="0 0 22 22" style="top:16.5px"><path d="M11,1.2 V13 M5.8,8.2 L11,13.4 L16.2,8.2" fill="none" stroke="#6fb879" stroke-width="2.9" stroke-linecap="round" stroke-linejoin="round"/><path d="M3,15 h5 l3,2.9 l3,-2.9 h5 a2.9,2.9 0 0 1 2.9,2.9 v1.5 a2.9,2.9 0 0 1 -2.9,2.9 h-16 a2.9,2.9 0 0 1 -2.9,-2.9 v-1.5 a2.9,2.9 0 0 1 2.9,-2.9 Z" fill="#6fb879"/><circle cx="17.2" cy="18.3" r="1" fill="#fff"/></svg><span class="td" style="left:42px;top:15px">2023-01-30</span><span class="td lnk" style="left:336px;top:15px;letter-spacing:-0.3px;transform:scaleX(0.8447);transform-origin:0 0;">TESTTESTTESTTESTTEST</span><span class="td" style="left:847px;top:15px;letter-spacing:-0.18px;">Afghanistan S&amp;C</span><span class="td" style="right:455px;top:15px">0</span><span class="pill" style="top:12px;width:112px"><svg style="left:11px;top:10px" width="12" height="14" viewBox="0 0 12 14"><path d="M1,1.2 H11 M1,12.8 H11 M2.5,1.2 V3 Q2.5,5 6,7 Q9.5,5 9.5,3 V1.2 M2.5,12.8 V11 Q2.5,9 6,7 Q9.5,9 9.5,11 V12.8" fill="none" stroke="#4d5a6e" stroke-width="1.6"/></svg><span class="pt" style="letter-spacing:-0.175px;">In progress</span></span><span class="btn" style="left:1742px;top:12px"><svg width="30" height="29" viewBox="0 0 30 29"><path d="M13.8,10.8 H10.6 A1.6,1.6 0 0 0 9,12.4 V18.8 A1.6,1.6 0 0 0 10.6,20.4 H17.4 A1.6,1.6 0 0 0 19,18.8 V15.4" fill="none" stroke="#fff" stroke-width="1.5"/><path d="M12.20,17.60 Q11.58,15.52 12.94,14.13 L17.41,9.55 L20.13,12.21 L15.66,16.78 Q14.29,18.18 12.20,17.60 Z" fill="#fff"/><path d="M18.04,8.91 L18.98,7.94 Q19.54,7.37 20.90,8.70 Q22.26,10.03 21.70,10.60 L20.76,11.56 Z" fill="#fff"/></svg></span><span class="btn" style="left:1776px;top:12px"><svg width="30" height="29" viewBox="0 0 30 29"><path d="M8.30,20.70 Q7.67,17.55 9.99,15.27 L15.86,9.55 L19.63,13.41 L13.76,19.14 Q11.44,21.41 8.30,20.70 Z" fill="#fff"/><path d="M16.64,9.06 L18.88,6.87 Q19.45,6.31 21.20,8.10 Q22.95,9.89 22.37,10.45 L20.13,12.64 Z" fill="#fff"/><path d="M11.22,12.81 L14.66,9.46" stroke="#fff" stroke-width="1.1" fill="none" transform="scale(1)"/></svg></span></div>
<div class="tr" style="top:885.400px;height:60.500px;background:#fff;border-top:1px solid #dfe2e6;"><svg class="rdl" width="15" height="15" viewBox="0 0 22 22" style="top:16.5px"><path d="M11,1.2 V13 M5.8,8.2 L11,13.4 L16.2,8.2" fill="none" stroke="#6fb879" stroke-width="2.9" stroke-linecap="round" stroke-linejoin="round"/><path d="M3,15 h5 l3,2.9 l3,-2.9 h5 a2.9,2.9 0 0 1 2.9,2.9 v1.5 a2.9,2.9 0 0 1 -2.9,2.9 h-16 a2.9,2.9 0 0 1 -2.9,-2.9 v-1.5 a2.9,2.9 0 0 1 2.9,-2.9 Z" fill="#6fb879"/><circle cx="17.2" cy="18.3" r="1" fill="#fff"/></svg><span class="td" style="left:42px;top:15px">2023-01-27</span><span class="td lnk" style="left:336px;top:15px;letter-spacing:-0.3px;transform:scaleX(0.9247);transform-origin:0 0;">TESTINGLOUFOR20CHARA</span><span class="td" style="left:847px;top:15px;letter-spacing:-0.713px;">ACME Inc.</span><span class="td" style="right:455px;top:15px">1</span><span class="pill" style="top:12px;width:94px"><svg style="left:12.5px;top:12.5px" width="13" height="10" viewBox="0 0 13 10"><path d="M1,5 L4.5,8.5 L12,1" fill="none" stroke="#4d5a6e" stroke-width="1.8"/></svg><span class="pt" style="letter-spacing:-0.503px;">Finished</span></span><span class="btn" style="left:1742px;top:12px"><svg width="30" height="29" viewBox="0 0 30 29"><path d="M8.1,14.5 C10.3,10.6 12.8,9 15.4,9 C18,9 20.5,10.6 22.7,14.5 C20.5,18.4 18,20 15.4,20 C12.8,20 10.3,18.4 8.1,14.5 Z" fill="#fff"/><circle cx="15.4" cy="14.4" r="3.4" fill="#71b87a"/><circle cx="15.5" cy="14.5" r="2.6" fill="#fff"/><circle cx="14.6" cy="13.6" r="0.9" fill="#71b87a"/></svg></span><span class="btn" style="left:1776px;top:12px"><svg width="30" height="29" viewBox="0 0 30 29"><path d="M8.30,20.70 Q7.67,17.55 9.99,15.27 L15.86,9.55 L19.63,13.41 L13.76,19.14 Q11.44,21.41 8.30,20.70 Z" fill="#fff"/><path d="M16.64,9.06 L18.88,6.87 Q19.45,6.31 21.20,8.10 Q22.95,9.89 22.37,10.45 L20.13,12.64 Z" fill="#fff"/><path d="M11.22,12.81 L14.66,9.46" stroke="#fff" stroke-width="1.1" fill="none" transform="scale(1)"/></svg></span></div>
<div class="tr" style="top:945.900px;height:60.400px;background:#f2f2f2;border-top:1px solid #dfe2e6;"><svg class="rdl" width="15" height="15" viewBox="0 0 22 22" style="top:16.5px"><path d="M11,1.2 V13 M5.8,8.2 L11,13.4 L16.2,8.2" fill="none" stroke="#6fb879" stroke-width="2.9" stroke-linecap="round" stroke-linejoin="round"/><path d="M3,15 h5 l3,2.9 l3,-2.9 h5 a2.9,2.9 0 0 1 2.9,2.9 v1.5 a2.9,2.9 0 0 1 -2.9,2.9 h-16 a2.9,2.9 0 0 1 -2.9,-2.9 v-1.5 a2.9,2.9 0 0 1 2.9,-2.9 Z" fill="#6fb879"/><circle cx="17.2" cy="18.3" r="1" fill="#fff"/></svg><span class="td" style="left:42px;top:15px">2023-01-25</span><span class="td lnk" style="left:336px;top:15px;letter-spacing:-0.3px;transform:scaleX(0.9837);transform-origin:0 0;">GI-0214</span><span class="td" style="left:847px;top:15px;letter-spacing:-0.18px;">Afghanistan S&amp;C</span><span class="td" style="right:455px;top:15px">1</span><span class="pill" style="top:12px;width:112px"><svg style="left:11px;top:10px" width="12" height="14" viewBox="0 0 12 14"><path d="M1,1.2 H11 M1,12.8 H11 M2.5,1.2 V3 Q2.5,5 6,7 Q9.5,5 9.5,3 V1.2 M2.5,12.8 V11 Q2.5,9 6,7 Q9.5,9 9.5,11 V12.8" fill="none" stroke="#4d5a6e" stroke-width="1.6"/></svg><span class="pt" style="letter-spacing:-0.175px;">In progress</span></span><span class="btn" style="left:1742px;top:12px"><svg width="30" height="29" viewBox="0 0 30 29"><path d="M13.8,10.8 H10.6 A1.6,1.6 0 0 0 9,12.4 V18.8 A1.6,1.6 0 0 0 10.6,20.4 H17.4 A1.6,1.6 0 0 0 19,18.8 V15.4" fill="none" stroke="#fff" stroke-width="1.5"/><path d="M12.20,17.60 Q11.58,15.52 12.94,14.13 L17.41,9.55 L20.13,12.21 L15.66,16.78 Q14.29,18.18 12.20,17.60 Z" fill="#fff"/><path d="M18.04,8.91 L18.98,7.94 Q19.54,7.37 20.90,8.70 Q22.26,10.03 21.70,10.60 L20.76,11.56 Z" fill="#fff"/></svg></span><span class="btn" style="left:1776px;top:12px"><svg width="30" height="29" viewBox="0 0 30 29"><path d="M8.30,20.70 Q7.67,17.55 9.99,15.27 L15.86,9.55 L19.63,13.41 L13.76,19.14 Q11.44,21.41 8.30,20.70 Z" fill="#fff"/><path d="M16.64,9.06 L18.88,6.87 Q19.45,6.31 21.20,8.10 Q22.95,9.89 22.37,10.45 L20.13,12.64 Z" fill="#fff"/><path d="M11.22,12.81 L14.66,9.46" stroke="#fff" stroke-width="1.1" fill="none" transform="scale(1)"/></svg></span></div>
<div class="tr" style="top:1006.300px;height:60.500px;background:#fff;border-top:1px solid #dfe2e6;"><svg class="rdl" width="15" height="15" viewBox="0 0 22 22" style="top:16.5px"><path d="M11,1.2 V13 M5.8,8.2 L11,13.4 L16.2,8.2" fill="none" stroke="#6fb879" stroke-width="2.9" stroke-linecap="round" stroke-linejoin="round"/><path d="M3,15 h5 l3,2.9 l3,-2.9 h5 a2.9,2.9 0 0 1 2.9,2.9 v1.5 a2.9,2.9 0 0 1 -2.9,2.9 h-16 a2.9,2.9 0 0 1 -2.9,-2.9 v-1.5 a2.9,2.9 0 0 1 2.9,-2.9 Z" fill="#6fb879"/><circle cx="17.2" cy="18.3" r="1" fill="#fff"/></svg><span class="td" style="left:42px;top:15px">2023-01-24</span><span class="td lnk" style="left:336px;top:15px;letter-spacing:-0.3px;transform:scaleX(1.0068);transform-origin:0 0;">12345678911234567891</span><span class="td" style="left:847px;top:15px;letter-spacing:-0.713px;">ACME Inc.</span><span class="td" style="right:455px;top:15px">2</span><span class="pill" style="top:12px;width:94px"><svg style="left:12.5px;top:12.5px" width="13" height="10" viewBox="0 0 13 10"><path d="M1,5 L4.5,8.5 L12,1" fill="none" stroke="#4d5a6e" stroke-width="1.8"/></svg><span class="pt" style="letter-spacing:-0.503px;">Finished</span></span><span class="btn" style="left:1742px;top:12px"><svg width="30" height="29" viewBox="0 0 30 29"><path d="M8.1,14.5 C10.3,10.6 12.8,9 15.4,9 C18,9 20.5,10.6 22.7,14.5 C20.5,18.4 18,20 15.4,20 C12.8,20 10.3,18.4 8.1,14.5 Z" fill="#fff"/><circle cx="15.4" cy="14.4" r="3.4" fill="#71b87a"/><circle cx="15.5" cy="14.5" r="2.6" fill="#fff"/><circle cx="14.6" cy="13.6" r="0.9" fill="#71b87a"/></svg></span><span class="btn" style="left:1776px;top:12px"><svg width="30" height="29" viewBox="0 0 30 29"><path d="M8.30,20.70 Q7.67,17.55 9.99,15.27 L15.86,9.55 L19.63,13.41 L13.76,19.14 Q11.44,21.41 8.30,20.70 Z" fill="#fff"/><path d="M16.64,9.06 L18.88,6.87 Q19.45,6.31 21.20,8.10 Q22.95,9.89 22.37,10.45 L20.13,12.64 Z" fill="#fff"/><path d="M11.22,12.81 L14.66,9.46" stroke="#fff" stroke-width="1.1" fill="none" transform="scale(1)"/></svg></span></div>
<div class="abs" style="left:51px;top:1089px;font-size:14px;color:#2c3a4f;line-height:16px;letter-spacing:-0.048px;">Showing 1 to 10 of 40 entries</div>
<div class="abs" style="left:1602px;top:1108px;width:267px;height:35px;border:1px solid #d6dae0;background:#fff"></div>
<div class="abs" style="left:1680px;top:1108px;width:1px;height:35px;background:#d6dae0"></div>
<div class="abs" style="left:1713px;top:1108px;width:1px;height:35px;background:#d6dae0"></div>
<div class="abs" style="left:1747px;top:1108px;width:1px;height:35px;background:#d6dae0"></div>
<div class="abs" style="left:1780px;top:1108px;width:1px;height:35px;background:#d6dae0"></div>
<div class="abs" style="left:1814px;top:1108px;width:1px;height:35px;background:#d6dae0"></div>
<div class="abs" style="left:1602px;width:78px;top:1118px;text-align:center;font-size:14px;color:#6db477;line-height:16px;letter-spacing:-0.438px;">Previous</div>
<div class="abs" style="left:1680px;width:33px;top:1118px;text-align:center;font-size:14px;color:#6db477;line-height:16px;">1</div>
<div class="abs" style="left:1713px;width:34px;top:1118px;text-align:center;font-size:14px;color:#6db477;line-height:16px;">2</div>
<div class="abs" style="left:1747px;width:33px;top:1118px;text-align:center;font-size:14px;color:#6db477;line-height:16px;">3</div>
<div class="abs" style="left:1780px;width:34px;top:1118px;text-align:center;font-size:14px;color:#6db477;line-height:16px;">4</div>
<div class="abs" style="left:1814px;width:55px;top:1118px;text-align:center;font-size:14px;color:#6db477;line-height:16px;letter-spacing:-0.166px;">Next</div>
<div class="abs" style="left:40px;top:1194px;font-size:12.5px;color:#8a929e;line-height:14px">v2.19</div>
<div class="abs" style="left:1785px;top:647px;width:46px;height:45px;border:5px solid #e81c24;z-index:5"></div>
</body></html>
